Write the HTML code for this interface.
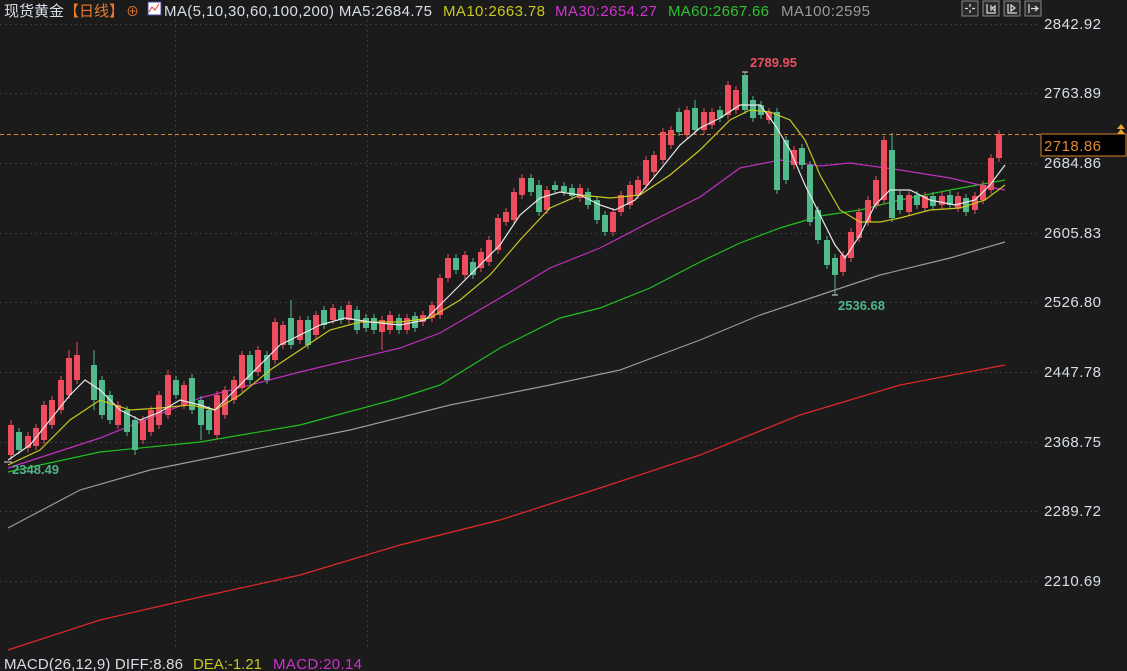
<!DOCTYPE html>
<html><head><meta charset="utf-8"><style>
html,body{margin:0;padding:0;background:#1b1b1b;overflow:hidden}
svg{display:block;font-family:"Liberation Sans","Noto Sans CJK SC",sans-serif}
</style></head><body>
<svg width="1127" height="671" viewBox="0 0 1127 671" xmlns="http://www.w3.org/2000/svg">
<rect width="1127" height="671" fill="#1b1b1b"/>
<g stroke="#3a3a3a" stroke-dasharray="2,3" stroke-width="1">
<line x1="0" y1="24.5" x2="1040" y2="24.5"/><line x1="0" y1="93.5" x2="1040" y2="93.5"/>
<line x1="0" y1="163.5" x2="1040" y2="163.5"/><line x1="0" y1="233.5" x2="1040" y2="233.5"/>
<line x1="0" y1="302.5" x2="1040" y2="302.5"/><line x1="0" y1="372.5" x2="1040" y2="372.5"/>
<line x1="0" y1="442.5" x2="1040" y2="442.5"/><line x1="0" y1="511.5" x2="1040" y2="511.5"/>
<line x1="0" y1="581.5" x2="1040" y2="581.5"/>
<line x1="175.5" y1="20" x2="175.5" y2="650"/><line x1="367.5" y1="20" x2="367.5" y2="650"/>
</g>
<g fill="none" stroke-width="1.2">
<polyline stroke="#e02828" points="8,650 100,620 200,597 300,575 400,545 500,520 600,488 700,455 800,415 900,385 1005,365"/>
<polyline stroke="#9a9a9a" points="8,528 80,490 150,470 250,450 350,430 450,405 550,385 620,370 700,340 760,315 820,295 880,275 950,258 1005,242"/>
<polyline stroke="#20c020" points="8,472 100,452 200,442 300,425 400,398 440,385 500,348 560,318 600,308 650,288 700,262 740,243 780,228 820,216 860,210 900,200 950,190 1005,180"/>
<polyline stroke="#c030c0" points="8,468 100,438 200,398 300,372 400,348 440,333 500,298 550,268 600,248 650,222 700,197 740,168 780,160 820,166 850,163 900,170 950,178 980,185 1005,190"/>
</g>
<g stroke="#52b98c" stroke-width="1" fill="none">
<path d="M19 428V454M94 350V410M102 376V419M110 391V424M127 406V436M135 416V455M176 376V399M192 374V414M201 396V440M209 406V434M250 351V384M267 351V384M291 300V349M308 316V349M324 306V329M341 306V324M357 306V334M366 314V332M374 314V334M399 314V334M415 312V332M456 254V274M473 258V279M531 174V196M539 180V216M555 181V194M564 182V196M572 184V200M588 188V209M597 196V224M605 211V236M679 108V136M695 100V134M720 106V122M745 72V114M753 96V122M761 101V119M777 108V194M786 136V184M802 144V169M810 161V226M818 206V244M827 236V269M835 254V295M892 133V222M900 191V214M917 191V209M933 192V210M950 191V209M966 194V216"/>
</g>
<g fill="#52b98c">
<rect x="16" y="432" width="6" height="18"/><rect x="91" y="365" width="6" height="35"/><rect x="99" y="380" width="6" height="35"/><rect x="107" y="395" width="6" height="25"/><rect x="124" y="410" width="6" height="22"/><rect x="132" y="420" width="6" height="30"/><rect x="173" y="380" width="6" height="15"/><rect x="189" y="378" width="6" height="32"/><rect x="198" y="400" width="6" height="25"/><rect x="206" y="410" width="6" height="20"/><rect x="247" y="355" width="6" height="25"/><rect x="264" y="355" width="6" height="25"/><rect x="288" y="318" width="6" height="27"/><rect x="305" y="320" width="6" height="25"/><rect x="321" y="310" width="6" height="15"/><rect x="338" y="310" width="6" height="10"/><rect x="354" y="310" width="6" height="20"/><rect x="363" y="318" width="6" height="10"/><rect x="371" y="318" width="6" height="12"/><rect x="396" y="318" width="6" height="12"/><rect x="412" y="316" width="6" height="12"/><rect x="453" y="258" width="6" height="12"/><rect x="470" y="262" width="6" height="13"/><rect x="528" y="178" width="6" height="14"/><rect x="536" y="185" width="6" height="27"/><rect x="552" y="185" width="6" height="5"/><rect x="561" y="186" width="6" height="6"/><rect x="569" y="188" width="6" height="8"/><rect x="585" y="192" width="6" height="13"/><rect x="594" y="200" width="6" height="20"/><rect x="602" y="215" width="6" height="17"/><rect x="676" y="112" width="6" height="20"/><rect x="692" y="108" width="6" height="22"/><rect x="717" y="110" width="6" height="8"/><rect x="742" y="75" width="6" height="35"/><rect x="750" y="100" width="6" height="18"/><rect x="758" y="105" width="6" height="10"/><rect x="774" y="112" width="6" height="78"/><rect x="783" y="140" width="6" height="40"/><rect x="799" y="148" width="6" height="17"/><rect x="807" y="165" width="6" height="57"/><rect x="815" y="210" width="6" height="30"/><rect x="824" y="240" width="6" height="25"/><rect x="832" y="258" width="6" height="17"/><rect x="889" y="150" width="6" height="68"/><rect x="897" y="195" width="6" height="15"/><rect x="914" y="195" width="6" height="10"/><rect x="930" y="196" width="6" height="10"/><rect x="947" y="195" width="6" height="10"/><rect x="963" y="198" width="6" height="14"/>
</g>
<g stroke="#ee4d5f" stroke-width="1" fill="none">
<path d="M11 420V460M28 432V452M36 424V450M44 401V444M52 396V429M61 376V414M69 350V399M77 342V384M118 401V429M143 416V444M151 406V436M159 391V429M168 370V419M184 381V409M217 391V439M225 386V419M234 376V404M242 351V392M258 346V376M275 318V364M283 321V349M300 316V344M316 311V339M333 304V324M349 301V324M382 316V350M390 311V334M407 314V334M423 311V326M432 301V322M440 274V319M448 254V282M465 251V279M481 248V272M489 236V266M498 214V254M506 208V226M514 188V224M522 174V199M547 186V214M580 184V202M613 208V236M621 191V216M630 181V209M638 176V199M646 156V189M654 151V176M663 128V164M671 126V149M687 106V139M704 108V134M712 108V129M728 81V119M736 86V114M769 108V124M794 146V169M843 251V276M851 228V262M859 208V242M868 196V226M876 176V209M884 136V204M909 191V216M925 192V212M942 192V209M958 192V212M975 192V214M983 181V204M991 154V194M999 130V162"/>
</g>
<g fill="#ee4d5f">
<rect x="8" y="425" width="6" height="30"/><rect x="25" y="436" width="6" height="12"/><rect x="33" y="428" width="6" height="18"/><rect x="41" y="405" width="6" height="35"/><rect x="49" y="400" width="6" height="25"/><rect x="58" y="380" width="6" height="30"/><rect x="66" y="358" width="6" height="37"/><rect x="74" y="355" width="6" height="25"/><rect x="115" y="405" width="6" height="20"/><rect x="140" y="420" width="6" height="20"/><rect x="148" y="410" width="6" height="22"/><rect x="156" y="395" width="6" height="30"/><rect x="165" y="375" width="6" height="40"/><rect x="181" y="385" width="6" height="20"/><rect x="214" y="395" width="6" height="40"/><rect x="222" y="390" width="6" height="25"/><rect x="231" y="380" width="6" height="20"/><rect x="239" y="355" width="6" height="33"/><rect x="255" y="350" width="6" height="22"/><rect x="272" y="322" width="6" height="38"/><rect x="280" y="325" width="6" height="20"/><rect x="297" y="320" width="6" height="20"/><rect x="313" y="315" width="6" height="20"/><rect x="330" y="308" width="6" height="12"/><rect x="346" y="305" width="6" height="15"/><rect x="379" y="320" width="6" height="12"/><rect x="387" y="315" width="6" height="15"/><rect x="404" y="318" width="6" height="12"/><rect x="420" y="315" width="6" height="7"/><rect x="429" y="305" width="6" height="13"/><rect x="437" y="278" width="6" height="37"/><rect x="445" y="258" width="6" height="20"/><rect x="462" y="255" width="6" height="20"/><rect x="478" y="252" width="6" height="16"/><rect x="486" y="240" width="6" height="22"/><rect x="495" y="218" width="6" height="32"/><rect x="503" y="212" width="6" height="10"/><rect x="511" y="192" width="6" height="28"/><rect x="519" y="178" width="6" height="17"/><rect x="544" y="190" width="6" height="20"/><rect x="577" y="188" width="6" height="10"/><rect x="610" y="212" width="6" height="20"/><rect x="618" y="195" width="6" height="17"/><rect x="627" y="185" width="6" height="20"/><rect x="635" y="180" width="6" height="15"/><rect x="643" y="160" width="6" height="25"/><rect x="651" y="155" width="6" height="17"/><rect x="660" y="132" width="6" height="28"/><rect x="668" y="130" width="6" height="15"/><rect x="684" y="110" width="6" height="25"/><rect x="701" y="112" width="6" height="18"/><rect x="709" y="112" width="6" height="13"/><rect x="725" y="85" width="6" height="30"/><rect x="733" y="90" width="6" height="20"/><rect x="766" y="112" width="6" height="8"/><rect x="791" y="150" width="6" height="15"/><rect x="840" y="255" width="6" height="17"/><rect x="848" y="232" width="6" height="26"/><rect x="856" y="212" width="6" height="26"/><rect x="865" y="200" width="6" height="22"/><rect x="873" y="180" width="6" height="25"/><rect x="881" y="140" width="6" height="60"/><rect x="906" y="195" width="6" height="17"/><rect x="922" y="196" width="6" height="12"/><rect x="939" y="196" width="6" height="9"/><rect x="955" y="196" width="6" height="12"/><rect x="972" y="196" width="6" height="14"/><rect x="980" y="185" width="6" height="15"/><rect x="988" y="158" width="6" height="32"/><rect x="996" y="134" width="6" height="24"/>
</g>
<g fill="none" stroke-width="1.2">
<polyline stroke="#c8c820" points="8,465 40,450 70,420 100,400 130,410 160,408 190,405 215,410 240,395 270,370 300,350 330,330 360,322 400,322 430,318 460,300 490,275 520,240 550,208 580,195 610,198 640,195 670,175 700,150 730,120 750,110 770,112 790,120 805,140 820,175 840,210 860,222 880,222 900,218 930,210 960,208 985,200 1005,185"/>
<polyline stroke="#e8e8e8" points="8,460 30,445 50,420 70,395 85,380 100,390 120,410 140,420 160,412 180,400 200,405 215,410 240,385 260,365 280,345 300,335 320,325 345,318 370,322 400,325 425,320 440,305 460,285 480,265 500,245 520,215 540,198 560,192 580,195 600,205 615,210 635,200 660,170 680,145 700,128 720,118 740,105 760,105 775,125 790,150 805,185 820,215 835,245 845,258 860,235 875,205 890,190 910,190 930,200 955,205 975,200 990,185 1005,165"/>
</g>
<path d="M742 72h6M832 295h6M4 462h8" stroke="#ddd"/>
<line x1="0" y1="134.5" x2="1040" y2="134.5" stroke="#d9822b" stroke-dasharray="4,3"/>
<g font-size="15" fill="#d8dee8">
<text x="1044" y="29" textLength="57">2842.92</text><text x="1044" y="98" textLength="57">2763.89</text>
<text x="1044" y="168" textLength="57">2684.86</text><text x="1044" y="238" textLength="57">2605.83</text>
<text x="1044" y="307" textLength="57">2526.80</text><text x="1044" y="377" textLength="57">2447.78</text>
<text x="1044" y="447" textLength="57">2368.75</text><text x="1044" y="516" textLength="57">2289.72</text>
<text x="1044" y="586" textLength="57">2210.69</text>
</g>
<rect x="1041" y="134" width="85" height="22" fill="#000" stroke="#d9822b"/>
<text x="1044" y="151" font-size="15" fill="#e08a2c" textLength="57">2718.86</text>
<path d="M1117 129l4-5 4 5zM1117 134l4-5 4 5z" fill="#e8a030"/>
<g stroke="#888" fill="#2a2a2a">
<rect x="962" y="1" width="16" height="15"/><rect x="983" y="1" width="16" height="15"/>
<rect x="1004" y="1" width="16" height="15"/><rect x="1025" y="1" width="16" height="15"/>
</g>
<g stroke="#ddd" stroke-width="1.2" fill="none">
<path d="M970 4v3M970 10v3M965 8.5h3M972 8.5h3"/>
<path d="M987 4v9h9M991 5v6M992 8l3-2v5z"/>
<path d="M1008 4v9h9M1011 5v6l4-3z"/>
<path d="M1029 4v9M1031 8.5h6M1035 6l3 2.5-3 2.5"/>
</g>
<text x="750" y="67" font-size="13" font-weight="bold" fill="#e8505f">2789.95</text>
<text x="838" y="310" font-size="13" font-weight="bold" fill="#4fb58a">2536.68</text>
<text x="12" y="474" font-size="13" font-weight="bold" fill="#4fb58a">2348.49</text>
<g font-size="15">
<text x="4" y="16" fill="#d8dee8">现货黄金</text>
<text x="64" y="16" fill="#e8792e">【日线】</text>
<text x="126" y="16" fill="#e8792e" font-size="13">⊕</text>
<rect x="148" y="2" width="13" height="13" fill="#fff" stroke="#44a"/>
<path d="M149 12l3-5 3 3 4-6" stroke="#e33" fill="none"/>
<text x="164" y="16" fill="#d8dee8" textLength="268">MA(5,10,30,60,100,200) MA5:2684.75</text>
<text x="443" y="16" fill="#c8c820" textLength="102">MA10:2663.78</text>
<text x="555" y="16" fill="#d030d0" textLength="102">MA30:2654.27</text>
<text x="668" y="16" fill="#30c030" textLength="101">MA60:2667.66</text>
<text x="781" y="16" fill="#999" textLength="89">MA100:2595</text>
<text x="4" y="669" fill="#d8dee8" textLength="179">MACD(26,12,9) DIFF:8.86</text>
<text x="193" y="669" fill="#c8c820" textLength="69">DEA:-1.21</text>
<text x="273" y="669" fill="#d030d0" textLength="89">MACD:20.14</text>
</g>
</svg>
</body></html>
